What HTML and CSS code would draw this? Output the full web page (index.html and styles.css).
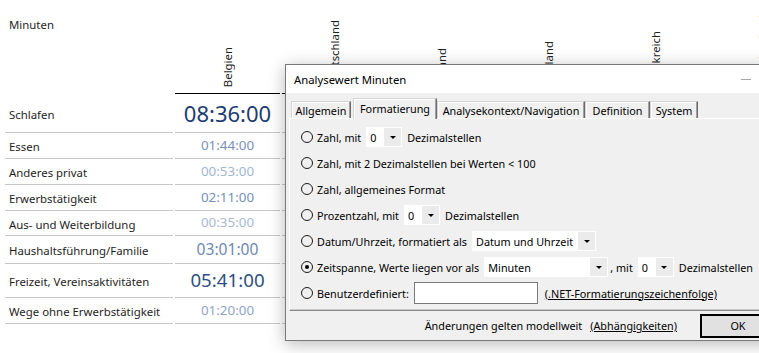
FILE: index.html
```html
<!DOCTYPE html>
<html lang="de">
<head>
<meta charset="utf-8">
<title>Analysewert Minuten</title>
<link rel="stylesheet" href="styles.css">
</head>
<body>
<div class="screen">
  <div class="pivot">
    <div class="corner">Minuten</div>
    <div class="colhead"><span>Belgien</span></div>
    <div class="colhead"><span>Deutschland</span></div>
    <div class="colhead"><span>Estland</span></div>
    <div class="colhead"><span>Finnland</span></div>
    <div class="colhead"><span>Frankreich</span></div>
    <div class="colhead"><span>Griechenland</span></div>

    <div class="cell label">Schlafen</div>
    <div class="cell val" style="font-size:22px;color:#1d3c72">08:36:00</div>
    <div class="cell"></div><div class="cell"></div><div class="cell"></div><div class="cell"></div><div class="cell"></div>

    <div class="cell label">Essen</div>
    <div class="cell val" style="font-size:13.4px;color:#7890b6">01:44:00</div>
    <div class="cell"></div><div class="cell"></div><div class="cell"></div><div class="cell"></div><div class="cell"></div>

    <div class="cell label">Anderes privat</div>
    <div class="cell val" style="font-size:13.4px;color:#a3b6d3">00:53:00</div>
    <div class="cell"></div><div class="cell"></div><div class="cell"></div><div class="cell"></div><div class="cell"></div>

    <div class="cell label">Erwerbstätigkeit</div>
    <div class="cell val" style="font-size:13.4px;color:#7690b7">02:11:00</div>
    <div class="cell"></div><div class="cell"></div><div class="cell"></div><div class="cell"></div><div class="cell"></div>

    <div class="cell label">Aus- und Weiterbildung</div>
    <div class="cell val" style="font-size:13.4px;color:#a7b9d5">00:35:00</div>
    <div class="cell"></div><div class="cell"></div><div class="cell"></div><div class="cell"></div><div class="cell"></div>

    <div class="cell label">Haushaltsführung/Familie</div>
    <div class="cell val" style="font-size:15.6px;color:#6d88b1">03:01:00</div>
    <div class="cell"></div><div class="cell"></div><div class="cell"></div><div class="cell"></div><div class="cell"></div>

    <div class="cell label">Freizeit, Vereinsaktivitäten</div>
    <div class="cell val" style="font-size:18.7px;color:#2f4f82">05:41:00</div>
    <div class="cell"></div><div class="cell"></div><div class="cell"></div><div class="cell"></div><div class="cell"></div>

    <div class="cell label">Wege ohne Erwerbstätigkeit</div>
    <div class="cell val" style="font-size:13.4px;color:#8fa5c7">01:20:00</div>
    <div class="cell"></div><div class="cell"></div><div class="cell"></div><div class="cell"></div><div class="cell"></div>
  </div>

  <div class="dialog">
    <div class="titlebar">
      <span class="title">Analysewert Minuten</span>
      <span class="wbtn"><span class="min"></span></span>
      <span class="wbtn"></span>
      <span class="wbtn"></span>
    </div>
    <div class="tabs">
      <div class="tab t1">Allgemein</div>
      <div class="tab t2 active">Formatierung</div>
      <div class="tab t3">Analysekontext/Navigation</div>
      <div class="tab t4">Definition</div>
      <div class="tab t5">System</div>
    </div>
    <div class="panel">
      <div class="opt"><span class="radio"></span><span>Zahl, mit</span><span class="combo small"><span class="cv">0</span><span class="arr"></span></span><span>Dezimalstellen</span></div>
      <div class="opt"><span class="radio"></span><span>Zahl, mit 2 Dezimalstellen bei Werten &lt; 100</span></div>
      <div class="opt"><span class="radio"></span><span>Zahl, allgemeines Format</span></div>
      <div class="opt"><span class="radio"></span><span>Prozentzahl, mit</span><span class="combo small"><span class="cv">0</span><span class="arr"></span></span><span>Dezimalstellen</span></div>
      <div class="opt"><span class="radio"></span><span>Datum/Uhrzeit, formatiert als</span><span class="combo wide"><span class="cv">Datum und Uhrzeit</span><span class="arr"></span></span></div>
      <div class="opt"><span class="radio on"></span><span>Zeitspanne, Werte liegen vor als</span><span class="combo wide tight"><span class="cv">Minuten</span><span class="arr"></span></span><span>, mit</span><span class="combo small"><span class="cv">0</span><span class="arr"></span></span><span>Dezimalstellen</span></div>
      <div class="opt"><span class="radio"></span><span>Benutzerdefiniert:</span><span class="textbox"></span><span class="link fmt">(.NET-Formatierungszeichenfolge)</span></div>
    </div>
    <div class="footer">
      <span>Änderungen gelten modellweit</span>
      <span class="link dep">(Abhängigkeiten)</span>
      <span class="btn ok">OK</span>
      <span class="btn cancel">Abbrechen</span>
    </div>
  </div>
</div>
</body>
</html>
```

FILE: styles.css
```css
* { box-sizing: border-box; }
html, body { margin: 0; padding: 0; }
body {
  background: #fff;
  width: 759px;
  height: 353px;
  overflow: hidden;
  font-family: "Noto Sans", sans-serif;
  color: #1e1e1e;
}
.screen {
  position: relative;
  width: 759px;
  height: 353px;
  overflow: hidden;
}

/* pivot table behind the dialog */
.pivot {
  display: grid;
  grid-template-columns: 168px repeat(6, 105px);
  grid-template-rows: 94px 39px 26px 26px 26px 25px 28px 34px 26px;
  column-gap: 2px;
  padding-left: 5px;
  width: max-content;
  font-size: 11.4px;
}
.corner {
  padding: 17px 0 0 4px;
  line-height: 16px;
}
.colhead {
  display: flex;
  align-items: flex-end;
  justify-content: center;
  border-bottom: 1px solid #000;
  padding-bottom: 6px;
}
.colhead span {
  writing-mode: vertical-rl;
  transform: rotate(180deg);
  white-space: nowrap;
  line-height: 15px;
}
.cell {
  display: flex;
  align-items: center;
  border-bottom: 1px solid #c8c8c8;
  white-space: nowrap;
}
.label {
  padding-left: 4px;
  padding-top: 2px;
}
.val {
  justify-content: center;
  line-height: 1;
}

/* dialog window */
.dialog {
  position: absolute;
  left: 285px;
  top: 64px;
  width: 577px;
  height: 277px;
  border: 1px solid #7a7a7a;
  background: #f0f0f0;
  box-shadow: 0 3px 16px rgba(0, 0, 0, 0.28);
  font-size: 10.8px;
  color: #000;
  display: flex;
  flex-direction: column;
}
.titlebar {
  flex: none;
  height: 28px;
  background: #fff;
  display: flex;
  align-items: center;
}
.title {
  flex: 1;
  padding-left: 8px;
  font-size: 11.3px;
}
.wbtn {
  width: 46px;
  height: 28px;
  display: flex;
  align-items: center;
  justify-content: center;
}
.min {
  width: 10px;
  height: 1px;
  background: #a6a6a6;
}

.tabs {
  flex: none;
  position: relative;
  z-index: 1;
  display: flex;
  align-items: flex-end;
  height: 20px;
  margin-top: 5px;
  padding-left: 5px;
}
.tab {
  height: 17px;
  display: flex;
  align-items: center;
  justify-content: center;
  white-space: nowrap;
  background: #f0f0f0;
  border-top: 1px solid #d4d4d4;
  border-left: 1px solid #d4d4d4;
  border-right: 1px solid #6b6b6b;
  box-shadow: inset -1px 0 #a0a0a0, inset 1px 1px #fff;
  padding-top: 1px;
}
.tab.active {
  height: 21px;
  margin-bottom: -1px;
  padding-bottom: 2px;
}
.t1 { width: 60px; }
.t2 { width: 84px; margin-left: 2px; }
.t3 { width: 148px; }
.t4 { width: 65px; }
.t5 { width: 48px; }

.panel {
  flex: none;
  height: 193px;
  margin: 0 3px 0 3px;
  border-top: 1px solid #fff;
  border-left: 1px solid #fff;
  border-bottom: 1px solid #8c8c8c;
  border-right: 1px solid #8c8c8c;
  box-shadow: inset 0 -1px #c8c8c8;
  padding: 5px 0 0 11px;
}
.opt {
  display: flex;
  align-items: center;
  height: 26px;
  white-space: nowrap;
}
.radio {
  flex: none;
  width: 12px;
  height: 12px;
  border: 1px solid #1a1a1a;
  border-radius: 50%;
  margin-right: 4px;
  display: flex;
  align-items: center;
  justify-content: center;
}
.radio.on::after {
  content: "";
  width: 4px;
  height: 4px;
  border-radius: 50%;
  background: #000;
}
.combo {
  flex: none;
  display: flex;
  height: 20px;
  margin: 0 5px;
  background: #fff;
  border: 1px solid #fff;
}
.combo.small { width: 36px; }
.combo.wide { width: 124px; }
.combo.tight { margin-right: 2px; }
.cv {
  flex: 1;
  display: flex;
  align-items: center;
  padding-left: 3px;
}
.arr {
  flex: none;
  width: 17px;
  background: #ebebeb;
  display: flex;
  align-items: center;
  justify-content: center;
}
.arr::after {
  content: "";
  border-left: 3px solid transparent;
  border-right: 3px solid transparent;
  border-top: 3px solid #000;
}
.textbox {
  flex: none;
  width: 124px;
  height: 22px;
  margin-left: 5px;
  background: #fff;
  border: 1px solid #7a7a7a;
}
.link {
  text-decoration: underline;
  color: #000;
}
.fmt { margin-left: 7px; }

.footer {
  flex: none;
  height: 29px;
  display: flex;
  align-items: center;
  justify-content: flex-end;
  padding-right: 4px;
  white-space: nowrap;
}
.dep { margin-left: 8px; }
.btn {
  flex: none;
  height: 24px;
  display: flex;
  align-items: center;
  justify-content: center;
  background: #e1e1e1;
}
.ok {
  width: 76px;
  margin-left: 23px;
  border: 2px solid #000;
}
.cancel {
  width: 75px;
  margin-left: 6px;
  border: 1px solid #adadad;
}
```
